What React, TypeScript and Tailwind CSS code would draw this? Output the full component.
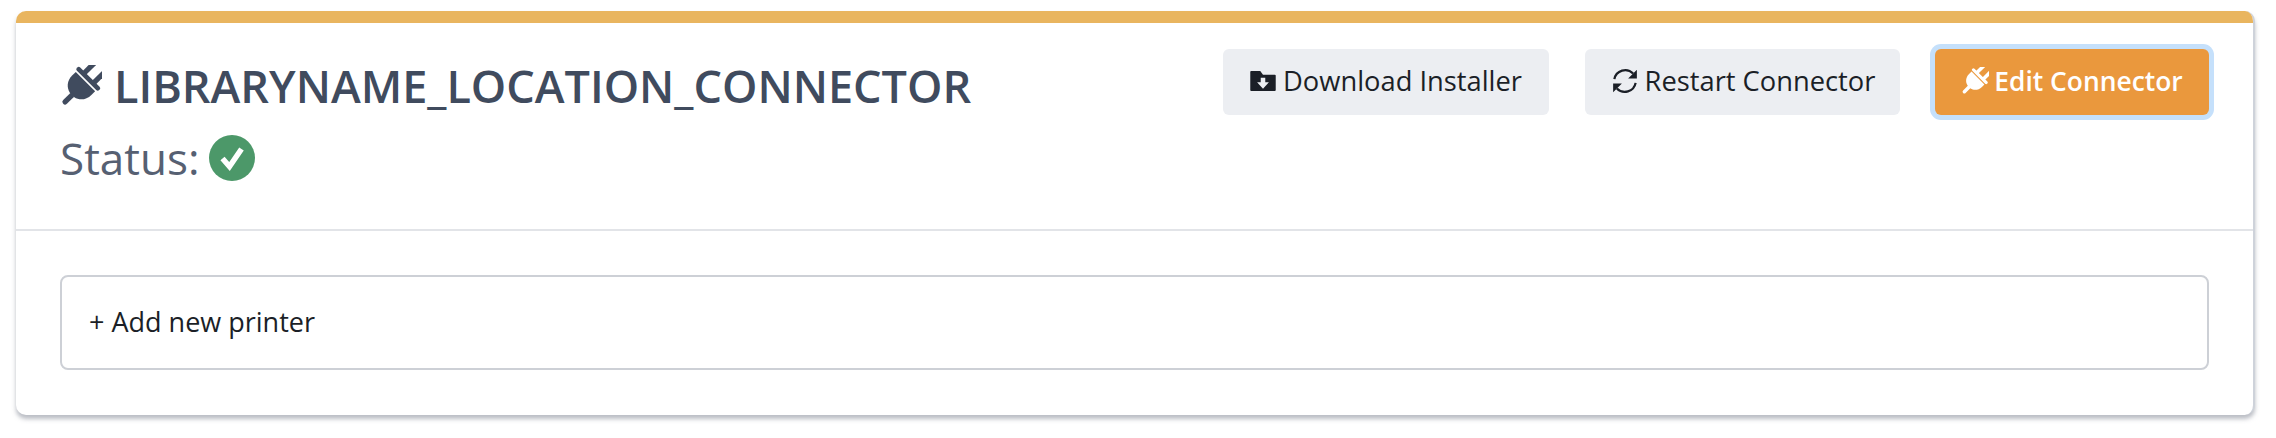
import React from 'react'

function PlugIcon({ className }: { className: string }) {
  return (
    <svg viewBox="0 0 40 40" className={className}>
      <g transform="rotate(45 20 20)" fill="currentColor">
        <rect x="11" y="-6" width="5" height="16" rx="2" />
        <rect x="24" y="-6" width="5" height="16" rx="2" />
        <rect x="5" y="8" width="30" height="4.500" rx="2" />
        <path d="M7 14h26v5c0 7-4.500 12-10 13H17C11.500 31 7 26 7 19z" />
        <rect x="17.500" y="30" width="5" height="14" rx="2.500" />
      </g>
    </svg>
  )
}

function FolderDownload() {
  return (
    <svg viewBox="0 0 28 22" className="h-[20px] w-[26px] fill-current">
      <path d="M1 0h10l3 4h13a1 1 0 0 1 1 1v16a1 1 0 0 1-1 1H1a1 1 0 0 1-1-1V1a1 1 0 0 1 1-1z" />
      <path d="M11.500 7.500h5v5h4L14 19.500 7.500 12.500h4z" fill="#eceef2" />
    </svg>
  )
}

function RefreshIcon() {
  return (
    <svg viewBox="0 0 24 24" className="h-[30px] w-[30px]">
      <path d="M3.500 10.500A8.800 8.800 0 0 1 18.500 6" fill="none" stroke="currentColor" strokeWidth="1.800" />
      <path d="M20.500 13.500A8.800 8.800 0 0 1 5.500 18" fill="none" stroke="currentColor" strokeWidth="1.800" />
      <path d="M21.500 3v7h-7zM2.500 21v-7h7z" fill="currentColor" />
    </svg>
  )
}

function CheckIcon() {
  return (
    <svg viewBox="0 0 46 46" className="h-[46px] w-[46px]">
      <circle cx="23" cy="23" r="23" fill="#4c9869" />
      <path d="M13.500 23.500l7 8L32.500 14" fill="none" stroke="#ffffff" strokeWidth="5.500" />
    </svg>
  )
}

function App() {
  return (
    <div className="bg-white min-h-[438px] pt-[11px] pl-[16px] font-['Open_Sans',sans-serif]">
      <div className="w-[2239px] h-[404px] bg-white rounded-[10px] overflow-hidden border-r-2 border-[#ced2da] shadow-[0_4px_4px_rgba(120,125,140,0.5)]">
        <div className="h-[12px] bg-[#e9b55f]" />
        <div className="h-[208px] border-b-2 border-[#e2e4e8] pl-[44px] pr-[44px] flex justify-between">
          <div>
            <h2 className="mt-[33px] flex items-center gap-[12px] text-[45px] leading-[60px] font-semibold text-[#404b5e]">
              <PlugIcon className="h-[42px] w-[42px]" />
              <span>LIBRARYNAME_LOCATION_CONNECTOR</span>
            </h2>
            <div className="mt-[14px] flex items-center gap-[10px] text-[44px] leading-[56px] text-[#566072]">
              <span>Status:</span>
              <CheckIcon />
            </div>
          </div>
          <div className="mt-[26px] flex items-start text-[27.3px] leading-[60px] font-medium">
            <button className="h-[66px] w-[326px] pb-[2px] rounded-[6px] bg-[#eceef2] text-[#1b1f27] flex items-center justify-center gap-[7px]">
              <FolderDownload />
              Download Installer
            </button>
            <button className="ml-[36px] h-[66px] w-[315px] pb-[2px] rounded-[6px] bg-[#eceef2] text-[#1b1f27] flex items-center justify-center gap-[5px]">
              <RefreshIcon />
              Restart Connector
            </button>
            <button className="ml-[35px] h-[66px] w-[274px] pb-[2px] rounded-[6px] bg-[#ea983d] text-white text-[26.4px] font-semibold ring-[5px] ring-[#c5e0fb] flex items-center justify-center gap-[5px]">
              <PlugIcon className="h-[28px] w-[28px]" />
              Edit Connector
            </button>
          </div>
        </div>
        <div className="pt-[44px] px-[44px]">
          <div className="h-[95px] w-[2149px] border-2 border-[#cdd0d6] rounded-[8px] flex items-center pl-[27px] text-[27px] font-medium text-[#1b1f27]">
            + Add new printer
          </div>
        </div>
      </div>
    </div>
  )
}

export default App
